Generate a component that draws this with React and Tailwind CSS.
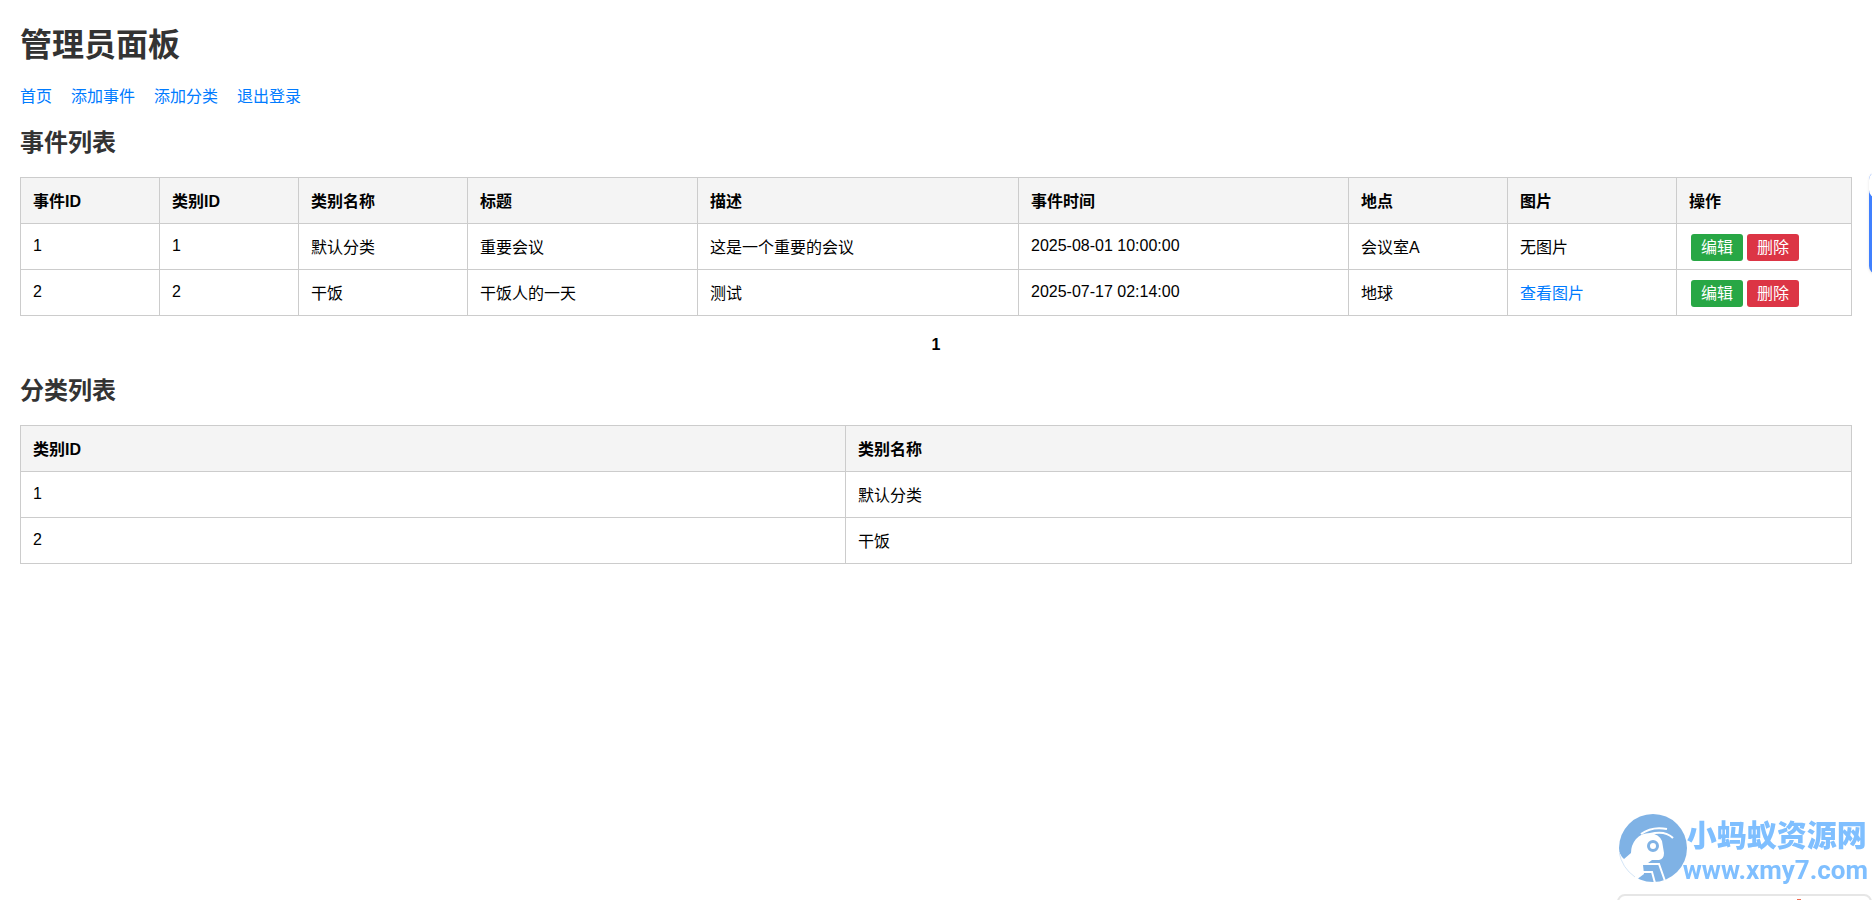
const events = [
  { id: 1, categoryId: 1, category: "默认分类", title: "重要会议", description: "这是一个重要的会议", time: "2025-08-01 10:00:00", place: "会议室A", image: null },
  { id: 2, categoryId: 2, category: "干饭", title: "干饭人的一天", description: "测试", time: "2025-07-17 02:14:00", place: "地球", image: "#image-2" },
];

const categories = [
  { id: 1, name: "默认分类" },
  { id: 2, name: "干饭" },
];

const navLinks = ["首页", "添加事件", "添加分类", "退出登录"];

function Th({ className = "", children }) {
  return (
    <th scope="col" className={`border border-[#cccccc] bg-[#f4f4f4] px-3 pt-[13px] pb-[11px] text-left align-top font-bold leading-[21px] ${className}`}>
      {children}
    </th>
  );
}

function Td({ children }) {
  return <td className="border border-[#cccccc] px-3 pt-[13px] pb-[11px] align-top leading-[21px]">{children}</td>;
}

// ids and dates sit on a shorter line
function NumTd({ children }) {
  return <td className="border border-[#cccccc] px-3 pt-[13px] pb-[11px] align-top leading-[18px]">{children}</td>;
}

function Actions() {
  return (
    <div className="-my-[3px] ml-[2px] flex gap-1">
      <button type="button" className="rounded-[3px] bg-[#28a745] px-[10px] py-[3px] leading-[21px] text-white">编辑</button>
      <button type="button" className="rounded-[3px] bg-[#dc3545] px-[10px] py-[3px] leading-[21px] text-white">删除</button>
    </div>
  );
}

function AntLogo() {
  return (
    <svg viewBox="0 0 68 68" className="h-[68px] w-[68px] shrink-0" aria-hidden="true">
      <circle cx="34" cy="34" r="34" fill="#7fb2e5" />
      <path d="M-1 36 L3 43 L5 45 L12 39 Q12 31 17 25 Q22 19 31 19 Q40 20 43 27 L45 39 Q45 45 40 46 L33 46 L29 49 L24 51 L25 60 L17 66 L16 69 L-2 69Z" fill="#fff" />
      <path d="M22 50 H40 L46 67 M22 58 H33 L36 69" fill="none" stroke="#fff" strokeWidth="2" />
      <path d="M0 38 Q3 54 16 63" fill="none" stroke="#d5e6f7" strokeWidth="1" />
      <circle cx="34" cy="32" r="4.5" fill="none" stroke="#7fb2e5" strokeWidth="3" />
      <path d="M22 20 Q33 12 48 15 M31 20 Q46 16 54 24" fill="none" stroke="#fff" strokeWidth="2" />
    </svg>
  );
}

export default function App() {
  return (
    <div className="min-h-screen overflow-hidden bg-white p-5 font-['Liberation_Sans','Noto_Sans_CJK_SC',sans-serif] text-base text-black">
      <h1 className="text-[32px] font-bold leading-[50px] text-[#333333]">管理员面板</h1>

      <nav className="mt-4 flex gap-[19px] leading-[21px] text-[#007bff]">
        {navLinks.map((label) => (
          <a key={label} href="#">{label}</a>
        ))}
      </nav>

      <h2 className="mt-5 text-2xl font-bold leading-8 text-[#333333]">事件列表</h2>
      <table className="mt-[18px] w-full table-fixed border-collapse">
        <thead>
          <tr>
            <Th className="w-[139px]">事件ID</Th>
            <Th className="w-[139px]">类别ID</Th>
            <Th className="w-[169px]">类别名称</Th>
            <Th className="w-[230px]">标题</Th>
            <Th>描述</Th>
            <Th className="w-[330px]">事件时间</Th>
            <Th className="w-[159px]">地点</Th>
            <Th className="w-[169px]">图片</Th>
            <Th className="w-[175px]">操作</Th>
          </tr>
        </thead>
        <tbody>
          {events.map((event) => (
            <tr key={event.id}>
              <NumTd>{event.id}</NumTd>
              <NumTd>{event.categoryId}</NumTd>
              <Td>{event.category}</Td>
              <Td>{event.title}</Td>
              <Td>{event.description}</Td>
              <NumTd>{event.time}</NumTd>
              <Td>{event.place}</Td>
              <Td>{event.image ? <a href={event.image} className="text-[#007bff]">查看图片</a> : "无图片"}</Td>
              <Td><Actions /></Td>
            </tr>
          ))}
        </tbody>
      </table>

      <div className="mt-5 text-center font-bold leading-[18px]">1</div>

      <h2 className="mt-[21px] text-2xl font-bold leading-8 text-[#333333]">分类列表</h2>
      <table className="mt-[18px] w-full table-fixed border-collapse">
        <thead>
          <tr>
            <Th className="w-[825px]">类别ID</Th>
            <Th>类别名称</Th>
          </tr>
        </thead>
        <tbody>
          {categories.map((category) => (
            <tr key={category.id}>
              <NumTd>{category.id}</NumTd>
              <Td>{category.name}</Td>
            </tr>
          ))}
        </tbody>
      </table>

      {/* edge of the floating side widget */}
      <div className="fixed -right-[37px] top-[172px] h-[102px] w-10 overflow-hidden rounded-lg bg-[#4080ff] shadow">
        <div className="h-[26px] rounded-b-lg bg-white" />
      </div>

      <div className="fixed bottom-[14px] right-1 flex items-start text-[#7fbfff]">
        <AntLogo />
        <div className="-ml-1 pt-1">
          <div className="pl-1 text-[30px] font-black leading-9">小蚂蚁资源网</div>
          <div className="font-['Roboto',sans-serif] text-[26px] font-bold leading-8">www.xmy7.com</div>
        </div>
      </div>

      {/* top of the toolbar below */}
      <div className="fixed -bottom-8 right-0 h-[38px] w-[255px] rounded-lg border-2 border-[#e6e6e6] bg-white">
        <div className="ml-[178px] mt-[3px] h-2 w-1 bg-[#f06a50]" />
      </div>
    </div>
  );
}
